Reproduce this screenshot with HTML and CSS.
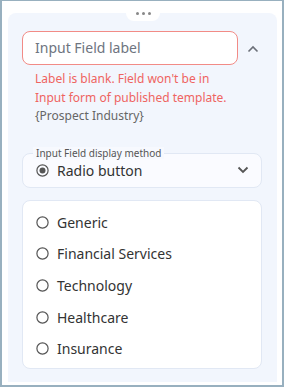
FILE: index.html
```html
<!DOCTYPE html>
<html lang="en">
<head>
  <meta charset="UTF-8" />
  <title>Field settings</title>
  <link rel="stylesheet" href="styles.css">
</head>
<body>
  <div class="frame">
    <div class="handle"><span></span><span></span><span></span></div>
    <div class="panel">
      <div class="label-row">
        <div class="label-input">Input Field label</div>
        <svg class="chev" width="12" height="8" viewBox="0 0 12 8"><path d="M1.5 6.5 L6 2 L10.5 6.5" fill="none" stroke="#6b6f78" stroke-width="1.6"/></svg>
      </div>
      <p class="error">Label is blank. Field won't be in Input form of published template.</p>
      <p class="var">{Prospect Industry}</p>

      <div class="select">
        <span class="legend">Input Field display method</span>
        <svg class="radio" width="13" height="13" viewBox="0 0 13 13"><circle cx="6.5" cy="6.5" r="5.6" fill="none" stroke="#555" stroke-width="1.2"/><circle cx="6.5" cy="6.5" r="3" fill="#555"/></svg>
        <span class="select-text">Radio button</span>
        <svg class="chev-down" width="12" height="8" viewBox="0 0 12 8"><path d="M1.5 1.5 L6 6 L10.5 1.5" fill="none" stroke="#555" stroke-width="1.8"/></svg>
      </div>

      <div class="options">
        <div class="option"><svg class="radio" width="13" height="13" viewBox="0 0 13 13"><circle cx="6.5" cy="6.5" r="5.6" fill="none" stroke="#555" stroke-width="1.2"/></svg>Generic</div>
        <div class="option"><svg class="radio" width="13" height="13" viewBox="0 0 13 13"><circle cx="6.5" cy="6.5" r="5.6" fill="none" stroke="#555" stroke-width="1.2"/></svg>Financial Services</div>
        <div class="option"><svg class="radio" width="13" height="13" viewBox="0 0 13 13"><circle cx="6.5" cy="6.5" r="5.6" fill="none" stroke="#555" stroke-width="1.2"/></svg>Technology</div>
        <div class="option"><svg class="radio" width="13" height="13" viewBox="0 0 13 13"><circle cx="6.5" cy="6.5" r="5.6" fill="none" stroke="#555" stroke-width="1.2"/></svg>Healthcare</div>
        <div class="option"><svg class="radio" width="13" height="13" viewBox="0 0 13 13"><circle cx="6.5" cy="6.5" r="5.6" fill="none" stroke="#555" stroke-width="1.2"/></svg>Insurance</div>
      </div>
    </div>
  </div>
</body>
</html>
```

FILE: styles.css
```css
body {
  margin: 0;
  font-family: 'Noto Sans', sans-serif;
  background: #fff;
}

.frame {   /* outer window border */
  position: relative;
  box-sizing: border-box;
  width: 284px;
  height: 387px;
  border: 2px solid #98b0bf;
  border-top-width: 1px;
  padding: 12px 5px 3px 6px;
  background: #fff;
}

.handle {   /* drag pill on top */
  position: absolute;
  top: 4px;
  left: 124px;
  width: 34px;
  height: 16px;
  background: #fff;
  border-radius: 8px;
  display: flex;
  justify-content: center;
  align-items: center;
  gap: 3px;
  z-index: 1;
}
.handle span {
  width: 3px;
  height: 3px;
  border-radius: 50%;
  background: #888;
}

.panel {
  box-sizing: border-box;
  height: 100%;
  background: #f2f6fd;
  border-radius: 8px 8px 0 0;
  padding: 18px 15px 0 14px;
}

.label-row {
  display: flex;
  align-items: center;
  gap: 9px;
}
.label-input {
  box-sizing: border-box;
  width: 216px;
  height: 34px;
  border: 1.5px solid #f28b86;
  border-radius: 8px;
  background: #fff;
  color: #6e7480;
  font-size: 14px;
  line-height: 31px;
  padding-left: 12px;
}
.chev {
  margin-top: 2px;
}

.error {
  margin: 5px 0 0 13px;
  color: #ef6461;
  font-size: 12px;
  line-height: 18.5px;
  width: 200px;
}
.var {
  margin: 0 0 0 13px;
  color: #666;
  font-size: 12px;
  line-height: 18.5px;
}

.select {
  position: relative;
  box-sizing: border-box;
  margin-top: 27px;
  height: 35px;
  border: 1px solid #e1e8f4;
  border-radius: 8px;
  background: #fafbff;
  display: flex;
  align-items: center;
  padding: 0 12px 0 13px;
}
.legend {   /* label sitting on the border */
  position: absolute;
  top: -7px;
  left: 10px;
  padding: 0 3px;
  background: #f7f9fe;
  color: #555;
  font-size: 10px;
  line-height: 12px;
}
.select-text {
  flex: 1;
  margin-left: 8px;
  margin-top: 1px;
  font-size: 14px;
  color: #333;
}

.options {
  box-sizing: border-box;
  margin-top: 12px;
  height: 169px;
  border: 1px solid #e1e8f4;
  border-radius: 8px;
  background: #fff;
  padding: 6px 0 0 13px;
}
.option {
  display: flex;
  align-items: center;
  gap: 8px;
  height: 31.6px;
  font-size: 14px;
  color: #333;
}
.radio {
  flex: none;
}
```
